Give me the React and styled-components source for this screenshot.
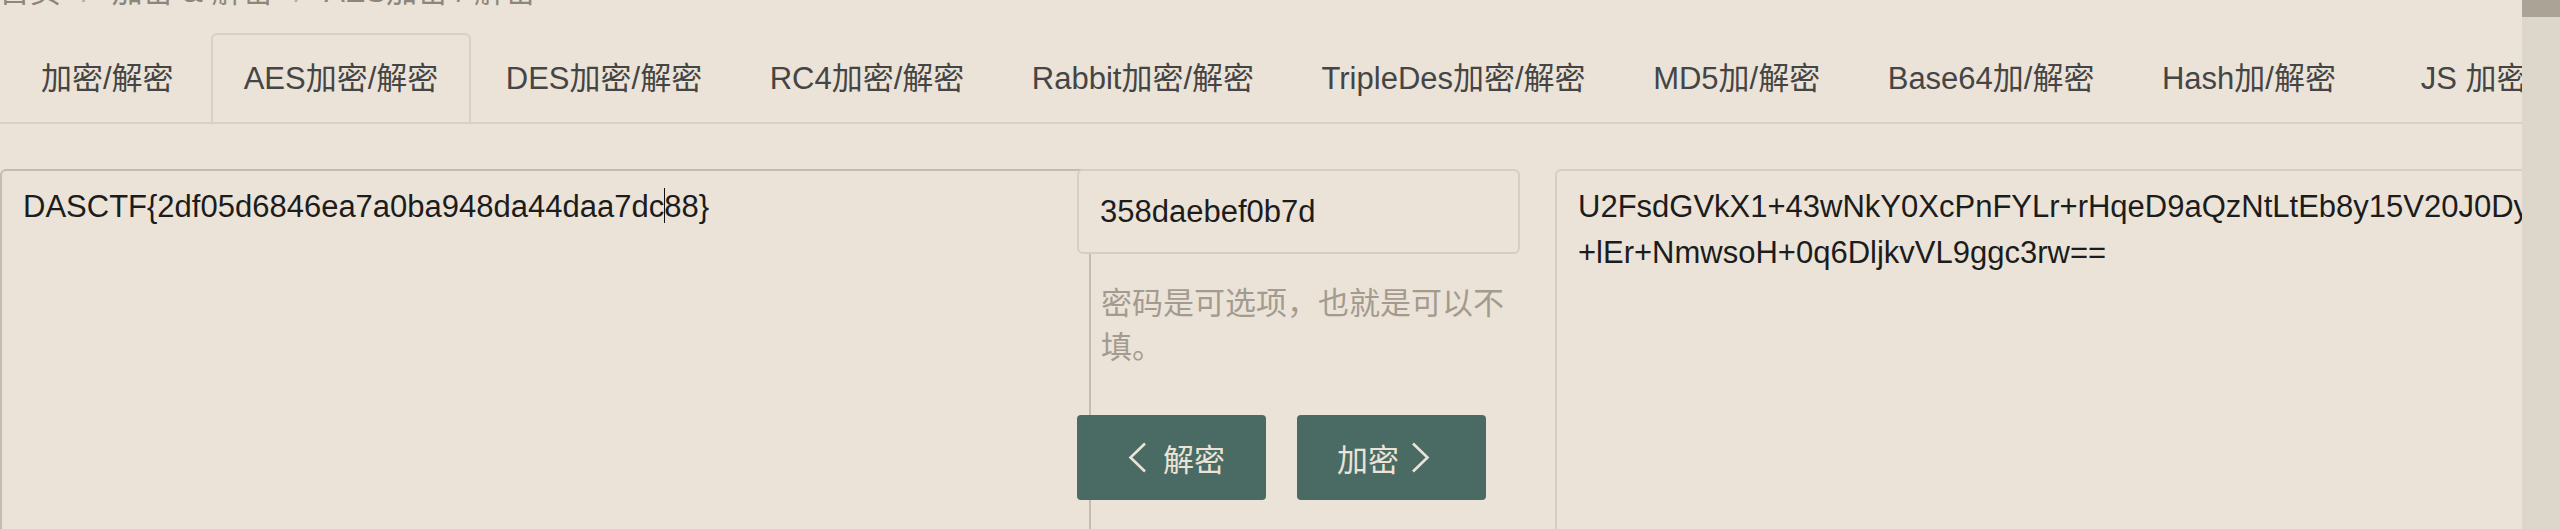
import { createGlobalStyle, styled } from "styled-components";

const GlobalStyle = createGlobalStyle`
  html, body {
    margin: 0;
    padding: 0;
    background: #ebe3d7;
    overflow: hidden;
  }
  body {
    font-family: "Liberation Sans", Arial, "Noto Sans CJK SC", sans-serif;
  }
`;

const Page = styled.div`
  display: flex;
  width: 2560px;
  height: 529px;
  overflow: hidden;
  background: #ebe3d7;
`;

const Main = styled.main`
  flex: 1;
  min-width: 0;
  overflow: hidden;
  font-size: 31px;
  line-height: 44px;
`;

const Scrollbar = styled.div`
  width: 38px;
  flex: none;
  background: #ddd6cb;
`;

const Thumb = styled.div`
  height: 17px;
  background: #aba396;
`;

const Breadcrumb = styled.ol`
  display: flex;
  list-style: none;
  margin: -30px 0 19px -1px;
  padding: 0;
  color: #8c867c;
  white-space: nowrap;
`;

const Sep = styled.li`
  margin: 0 21px;
  color: #b3ab9f;
`;

const Tabs = styled.ul`
  display: flex;
  list-style: none;
  margin: 0;
  padding: 0 0 0 8px;
  border-bottom: 2px solid #dad1c4;
  white-space: nowrap;
`;

const Tab = styled.li`
  flex: none;
  padding: 22px 31px 21px;
  margin-right: ${({ $first }) => ($first ? 4 : 1.5)}px;
  border: 2px solid ${({ $active }) => ($active ? "#d9d0c3" : "transparent")};
  border-bottom: none;
  border-radius: 6px 6px 0 0;
  color: #454545;
`;

const Row = styled.div`
  display: flex;
  align-items: flex-start;
  margin-top: 45px;
`;

const Editor = styled.div`
  box-sizing: border-box;
  flex: none;
  width: ${({ $width }) => $width}px;
  height: 420px;
  margin-left: ${({ $gap }) => $gap || 0}px;
  padding: 13px 20px 13px 21px;
  border: 2px solid ${({ $dark }) => ($dark ? "#c5bcaf" : "#d7cec1")};
  border-radius: 6px;
  color: #1c1c1c;
  line-height: 46px;
  white-space: pre;
  overflow: hidden;
`;

const Caret = styled.span`
  display: inline-block;
  width: 1px;
  height: 35px;
  margin-right: -1px;
  vertical-align: -6px;
  background: #111;
`;

const Middle = styled.div`
  flex: none;
  width: 443px;
  margin-left: -14px;
`;

const KeyInput = styled.input`
  box-sizing: border-box;
  display: block;
  width: 100%;
  height: 85px;
  padding: 0 21px;
  border: 2px solid #d7cec1;
  border-radius: 6px;
  background: #ebe3d7;
  color: #1c1c1c;
  font: inherit;
  outline: none;
`;

const Hint = styled.p`
  margin: 25px 0 0;
  padding: 0 0 0 24px;
  color: #a39b8f;
  font-family: "Noto Sans CJK SC", sans-serif;
`;

const Actions = styled.div`
  display: flex;
  gap: 31px;
  margin-top: 48px;
`;

const Button = styled.button`
  display: flex;
  align-items: center;
  gap: ${({ $gap }) => $gap}px;
  width: 189px;
  height: 85px;
  padding: 0 0 0 ${({ $lead }) => $lead}px;
  border: none;
  border-radius: 4px;
  background: #4a6b63;
  color: #ebe3d7;
  font-family: "Noto Sans CJK SC", sans-serif;
  font-size: 31px;
  cursor: pointer;
`;

const Chevron = ({ dir }) => (
  <svg width="19" height="31" viewBox="0 0 19 31" fill="none">
    <polyline
      points={dir === "left" ? "17,1.5 2.5,15.5 17,29.5" : "2,1.5 16.5,15.5 2,29.5"}
      stroke="#ebe3d7"
      strokeWidth="2.6"
    />
  </svg>
);

const tabs = [
  "加密/解密",
  "AES加密/解密",
  "DES加密/解密",
  "RC4加密/解密",
  "Rabbit加密/解密",
  "TripleDes加密/解密",
  "MD5加/解密",
  "Base64加/解密",
  "Hash加/解密",
  "\u00a0\u00a0JS 加密/解密",
];

export default function App() {
  return (
    <>
      <GlobalStyle />
      <Page>
        <Main>
          <Breadcrumb>
            <li>首页</li>
            <Sep>/</Sep>
            <li>加密 &amp; 解密</li>
            <Sep>/</Sep>
            <li>AES加密 / 解密</li>
          </Breadcrumb>
          <Tabs>
            {tabs.map((t, i) => (
              <Tab key={i} $active={i === 1} $first={i === 0}>
                {t}
              </Tab>
            ))}
          </Tabs>
          <Row>
            <Editor $width={1091} $dark>
              DASCTF{"{"}2df05d6846ea7a0ba948da44daa7dc
              <Caret />
              88{"}"}
            </Editor>
            <Middle>
              <KeyInput defaultValue="358daebef0b7d" />
              <Hint>密码是可选项，也就是可以不填。</Hint>
              <Actions>
                <Button $lead={51} $gap={16}>
                  <Chevron dir="left" />
                  解密
                </Button>
                <Button $lead={40} $gap={12}>
                  加密
                  <Chevron dir="right" />
                </Button>
              </Actions>
            </Middle>
            <Editor $width={1100} $gap={35}>
              {"U2FsdGVkX1+43wNkY0XcPnFYLr+rHqeD9aQzNtLtEb8y15V20J0DyQ7s\n+lEr+NmwsoH+0q6DljkvVL9ggc3rw=="}
            </Editor>
          </Row>
        </Main>
        <Scrollbar>
          <Thumb />
        </Scrollbar>
      </Page>
    </>
  );
}
